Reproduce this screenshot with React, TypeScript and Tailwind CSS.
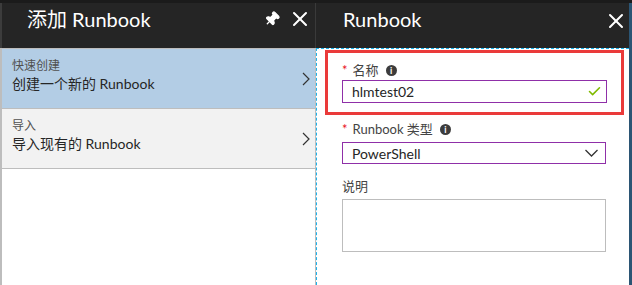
import { Check, Pin, X } from "lucide-react";

const font = { fontFamily: 'Lato, "Noto Sans CJK SC", sans-serif' };

function InfoDot() {
  return (
    <span className="ml-[7px] inline-flex h-[11px] w-[11px] items-center justify-center rounded-full bg-[#3c3c3c] text-[9px] font-bold leading-none text-white">
      i
    </span>
  );
}

function ListItem({ label, text, active }: { label: string; text: string; active?: boolean }) {
  return (
    <div
      className={
        "flex h-[60px] justify-between border-b border-[#bdbdbd] pl-[10px] pr-[5px] " +
        (active ? "bg-[#b3cde5]" : "bg-[#f2f2f2]")
      }
    >
      <div className="flex flex-col pt-[8px]">
        <span className="text-[12px] leading-[17px] text-[#505050]">{label}</span>
        <span className="text-[14px] leading-[20px] text-[#262626]">{text}</span>
      </div>
      <svg width="8" height="14" viewBox="0 0 8 14" className="self-center text-[#333]">
        <polyline points="1,1 7,7 1,13" fill="none" stroke="currentColor" strokeWidth="1.2" />
      </svg>
    </div>
  );
}

export default function App() {
  return (
    <div className="flex h-[285px] w-[632px] flex-col overflow-hidden bg-white" style={font}>
      <div className="h-[3px] bg-[#1b1b1b]" />
      <div className="flex flex-1">
        {/* left blade */}
        <div className="flex w-[316px] flex-col">
          <div className="flex h-[45px] items-start border-l-2 border-r border-l-[#3c3c3c] border-r-[#3a3a3a] bg-[#252525] pt-[3px]">
            <span className="ml-[25px] text-[20px] leading-[26px] text-white">添加 Runbook</span>
            <div className="ml-auto mr-[3px] mt-[1px] flex items-center gap-[2px] text-white">
              <Pin size={16} fill="white" strokeWidth={2} className="mr-[6px] rotate-45" />
              <X size={24} strokeWidth={2} />
            </div>
          </div>
          <div className="flex-1 border-l-2 border-r border-t border-[#bdbdbd] bg-white">
            <ListItem label="快速创建" text="创建一个新的 Runbook" active />
            <ListItem label="导入" text="导入现有的 Runbook" />
          </div>
        </div>

        {/* right blade */}
        <div className="flex flex-1 flex-col border-r-[3px] border-[#2b5574]">
          <div className="flex h-[45px] items-start bg-[#252525] pt-[3px]">
            <span className="ml-[27px] text-[20px] leading-[26px] text-white">Runbook</span>
            <X size={24} strokeWidth={2} className="ml-auto mr-[1px] mt-[3px] text-white" />
          </div>
          <div className="flex-1 border-l border-t border-dashed border-[#1db3ec] bg-white pl-[8px] pr-[4px] pt-[1px]">
            <div className="w-[299px] border-[3px] border-[#ea3a3a] px-[14px] pb-[9px] pt-[8px]">
              <div className="flex items-center text-[13px] leading-[18px] text-[#444]">
                <span className="mr-[5px] text-[#e81123]">*</span>
                名称
                <InfoDot />
              </div>
              <div className="mt-[1px] flex h-[23px] items-center justify-between border border-[#8f2fa8] pl-[9px] pr-[4px] text-[14px] text-[#262626]">
                hlmtest02
                <Check size={15} strokeWidth={2.5} className="text-[#7fba00]" />
              </div>
            </div>
            <div className="pl-[17px] pr-[19px] pt-[5px]">
              <div className="flex items-center text-[13px] leading-[18px] text-[#444]">
                <span className="mr-[5px] text-[#e81123]">*</span>
                Runbook 类型
                <InfoDot />
              </div>
              <div className="mt-[4px] flex h-[22px] items-center justify-between border border-[#8f2fa8] pl-[9px] pr-[7px] text-[14px] text-[#262626]">
                PowerShell
                <svg width="13" height="8" viewBox="0 0 13 8" className="text-[#333]">
                  <polyline points="0.5,1 6.5,7 12.5,1" fill="none" stroke="currentColor" strokeWidth="1.3" />
                </svg>
              </div>
              <div className="mt-[13px] text-[13px] leading-[18px] text-[#444]">说明</div>
              <div className="mt-[4px] h-[53px] border border-[#bdbdbd]" />
            </div>
          </div>
        </div>
      </div>
    </div>
  );
}
